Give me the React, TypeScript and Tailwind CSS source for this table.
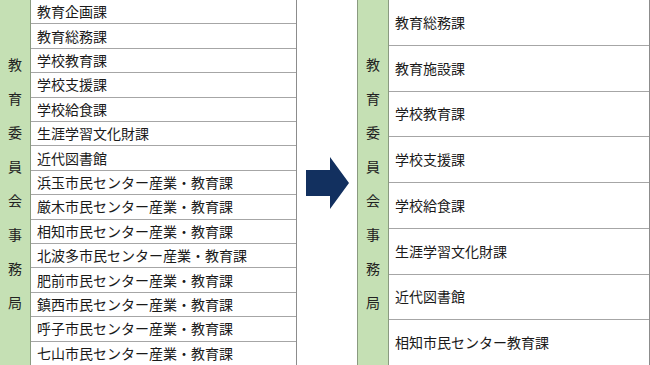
const beforeRows = [
  "教育企画課",
  "教育総務課",
  "学校教育課",
  "学校支援課",
  "学校給食課",
  "生涯学習文化財課",
  "近代図書館",
  "浜玉市民センター産業・教育課",
  "厳木市民センター産業・教育課",
  "相知市民センター産業・教育課",
  "北波多市民センター産業・教育課",
  "肥前市民センター産業・教育課",
  "鎮西市民センター産業・教育課",
  "呼子市民センター産業・教育課",
  "七山市民センター産業・教育課",
];

const afterRows = [
  "教育総務課",
  "教育施設課",
  "学校教育課",
  "学校支援課",
  "学校給食課",
  "生涯学習文化財課",
  "近代図書館",
  "相知市民センター教育課",
];

const label = ["教", "育", "委", "員", "会", "事", "務", "局"];

const LabelColumn = () => (
  <div className="flex w-[31px] shrink-0 flex-col items-center justify-center gap-[20px] border-r border-[#8a9a80] bg-[#c5e0b4] text-[14px] leading-[14px] text-[#222]">
    {label.map((c) => (
      <span key={c}>{c}</span>
    ))}
  </div>
);

const Table = ({ rows, className }: { rows: string[]; className: string }) => (
  <div className={`flex h-[365px] ${className}`}>
    <LabelColumn />
    <div className="flex flex-1 flex-col border-r border-[#8c8c8c] bg-white">
      {rows.map((r, i) => (
        <div
          key={r}
          className={`flex flex-1 items-center px-[6px] text-[14px] text-[#1a1a1a] ${
            i < rows.length - 1 ? "border-b border-[#a6a6a6]" : ""
          }`}
        >
          {r}
        </div>
      ))}
    </div>
  </div>
);

export default function App() {
  return (
    <div
      className="flex h-[365px] w-[650px] overflow-hidden bg-white"
      style={{ fontFamily: '"Noto Sans CJK JP", "Noto Sans", sans-serif' }}
    >
      <Table rows={beforeRows} className="w-[297px]" />
      <div className="flex w-[60px] shrink-0 items-center pl-[9px]">
        <svg width="44" height="52" viewBox="0 0 44 52">
          <polygon points="0,13 24,13 24,0 43,26 24,52 24,39 0,39" fill="#12305f" />
        </svg>
      </div>
      <div className="border-l border-[#8a9a80]">
        <Table rows={afterRows} className="w-[292px]" />
      </div>
    </div>
  );
}
